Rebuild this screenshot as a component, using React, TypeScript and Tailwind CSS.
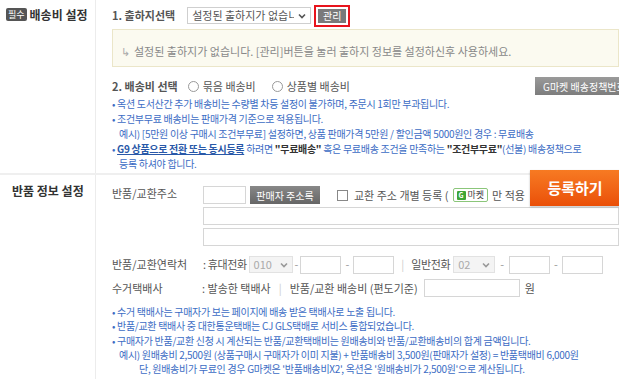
import React from "react";

const font = { fontFamily: '"Noto Sans CJK KR", "Noto Sans", sans-serif' };

function Select({ value, w }: { value: string; w: string }) {
  return (
    <div className={`flex h-[17px] items-center justify-between border border-[#cfcfcf] bg-white px-1 text-[11px] text-[#555] ${w}`}>
      <span className="overflow-hidden whitespace-nowrap">{value}</span>
      <svg width="8" height="6" viewBox="0 0 8 6" className="ml-1 shrink-0">
        <path d="M1 1.5 L4 4.5 L7 1.5" stroke="#555" strokeWidth="1.6" fill="none" />
      </svg>
    </div>
  );
}

function DimSelect({ value, w }: { value: string; w: string }) {
  return (
    <div className={`flex h-[17px] items-center justify-between border border-[#e2e2e2] bg-[#f4f4f4] px-1 text-[11px] text-[#aaa] ${w}`}>
      <span>{value}</span>
      <svg width="8" height="6" viewBox="0 0 8 6" className="shrink-0">
        <path d="M1 1.5 L4 4.5 L7 1.5" stroke="#999" strokeWidth="1.6" fill="none" />
      </svg>
    </div>
  );
}

function Box({ w }: { w: string }) {
  return <div className={`h-[18px] border border-[#d6d6d6] bg-white ${w}`} />;
}

export default function App() {
  return (
    <div style={font} className="relative h-[379px] w-[619px] overflow-hidden bg-white text-[11px] text-[#555]">
      {/* 배송비 설정 */}
      <div className="flex h-[175px] border-b-2 border-[#efefef]">
        <div className="flex w-[96px] shrink-0 items-start gap-[3px] border-r border-[#ececec] pl-[6px] pt-[8px]">
          <span className="rounded-[2px] bg-[#555] px-[2px] text-[9px] leading-[13px] text-white">필수</span>
          <span className="text-[12px] font-bold leading-[14px] text-[#333]">배송비 설정</span>
        </div>
        <div className="flex-1 pl-4">
          <div className="flex h-[29px] items-center pt-[2px]">
            <span className="font-bold text-[#555]">1. 출하지선택</span>
            <div className="ml-3">
              <Select value="설정된 출하지가 없습니다" w="w-[124px]" />
            </div>
            <div className="ml-[3px] flex h-[22px] w-[36px] items-center justify-center border-2 border-[#e8141c]">
              <span className="flex h-[14px] w-[28px] items-center justify-center bg-[#7a7a7a] text-[10px] text-white">관리</span>
            </div>
          </div>
          <div className="flex h-[38px] items-center border border-[#ebe6c9] bg-[#fbfaf0] pl-2 pt-[7px] text-[#888]">
            <span className="mr-1 text-[#aaa]">↳</span> 설정된 출하지가 없습니다. [관리]버튼을 눌러 출하지 정보를 설정하신후 사용하세요.
          </div>
          <div className="mt-[9px] flex h-[20px] items-center">
            <span className="font-bold text-[#555]">2. 배송비 선택</span>
            <label className="ml-[10px] flex items-center gap-[4px]">
              <span className="h-[11px] w-[11px] rounded-full border border-[#999] bg-white" />
              묶음 배송비
            </label>
            <label className="ml-[16px] flex items-center gap-[4px]">
              <span className="h-[11px] w-[11px] rounded-full border border-[#999] bg-white" />
              상품별 배송비
            </label>
            <span className="ml-auto flex h-[18px] w-[84px] items-center overflow-hidden whitespace-nowrap bg-gradient-to-b from-[#9a9a9a] to-[#7d7d7d] pl-[8px] text-[10px] text-white">
              G마켓 배송정책번호
            </span>
          </div>
          <ul className="text-[10px] leading-[15px] tracking-[-0.3px] text-[#3c6cc4]">
            <li>• 옥션 도서산간 추가 배송비는 수량별 차등 설정이 불가하며, 주문시 1회만 부과됩니다.</li>
            <li>• 조건부무료 배송비는 판매가격 기준으로 적용됩니다.</li>
            <li className="pl-[7px]">예시) [5만원 이상 구매시 조건부무료] 설정하면, 상품 판매가격 5만원 / 할인금액 5000원인 경우 : 무료배송</li>
            <li>
              • <b className="text-[#2958a8] underline">G9 상품으로 전환 또는 동시등록</b> 하려면 <b className="text-[#333]">"무료배송"</b> 혹은 무료배송 조건을 만족하는 <b className="text-[#333]">"조건부무료"</b>(선불) 배송정책으로
            </li>
            <li className="pl-[7px]">등록 하셔야 합니다.</li>
          </ul>
        </div>
      </div>

      {/* 반품 정보 설정 */}
      <div className="flex h-[204px]">
        <div className="w-[96px] shrink-0 border-r border-[#ececec] pl-[12px] pt-[7px]">
          <span className="text-[12px] font-bold text-[#333]">반품 정보 설정</span>
        </div>
        <div className="flex-1 pl-4 pt-[11px]">
          <div className="flex">
            <div className="w-[91px] shrink-0 leading-[14px]">반품/교환주소</div>
            <div className="flex flex-1 flex-col gap-[3px]">
              <div className="flex h-[18px] items-center">
                <Box w="w-[43px]" />
                <span className="ml-[4px] flex h-[18px] w-[70px] items-center justify-center bg-gradient-to-b from-[#888] to-[#666] text-[10px] text-white">판매자 주소록</span>
                <span className="ml-[17px] h-[11px] w-[11px] border border-[#888] bg-white" />
                <span className="ml-[6px]">교환 주소 개별 등록 (</span>
                <span className="ml-[4px] flex h-[14px] items-center gap-[2px] rounded-[2px] border border-[#8bc67a] px-[3px] text-[9px] text-[#444]">
                  <span className="flex h-[9px] w-[9px] items-center justify-center rounded-[1px] bg-[#3fa535] text-[7px] font-bold text-white">G</span>
                  마켓
                </span>
                <span className="ml-[4px]">만 적용</span>
              </div>
              <Box w="w-full" />
              <Box w="w-full" />
            </div>
          </div>

          <div className="mt-[10px] flex h-[17px] items-center">
            <div className="w-[91px] shrink-0">반품/교환연락처</div>
            <span className="tracking-[-0.4px]">: 휴대전화</span>
            <div className="ml-[2px]"><DimSelect value="010" w="w-[44px]" /></div>
            <span className="mx-[2px] text-[#999]">-</span>
            <Box w="w-[41px]" />
            <span className="mx-[4px] text-[#999]">-</span>
            <Box w="w-[41px]" />
            <span className="mx-[7px] text-[#ccc]">|</span>
            <span className="tracking-[-0.4px]">일반전화</span>
            <div className="ml-[3px]"><DimSelect value="02" w="w-[42px]" /></div>
            <span className="mx-[5px] text-[#999]">-</span>
            <Box w="w-[41px]" />
            <span className="mx-[4px] text-[#999]">-</span>
            <Box w="w-[41px]" />
          </div>

          <div className="mt-[6px] flex h-[18px] items-center">
            <div className="w-[90px] shrink-0">수거택배사</div>
            <span>: 발송한 택배사</span>
            <span className="mx-[8px] text-[#ccc]">|</span>
            <span>반품/교환 배송비 (편도기준)</span>
            <div className="ml-[6px]"><Box w="w-[96px]" /></div>
            <span className="ml-[5px]">원</span>
          </div>

          <ul className="mt-[8px] text-[10px] leading-[14.3px] tracking-[-0.3px] text-[#3c6cc4]">
            <li>• 수거 택배사는 구매자가 보는 페이지에 배송 받은 택배사로 노출 됩니다.</li>
            <li>• 반품/교환 택배사 중 대한통운택배는 CJ GLS택배로 서비스 통합되었습니다.</li>
            <li>• 구매자가 반품/교환 신청 시 계산되는 반품/교환택배비는 원배송비와 반품/교환배송비의 합계 금액입니다.</li>
            <li className="pl-[7px]">예시) 원배송비 2,500원 (상품구매시 구매자가 이미 지불) + 반품배송비 3,500원(판매자가 설정) = 반품택배비 6,000원</li>
            <li className="pl-[27px]">단, 원배송비가 무료인 경우 G마켓은 '반품배송비X2', 옥션은 '원배송비가 2,500원'으로 계산됩니다.</li>
          </ul>
        </div>
      </div>

      <div className="absolute left-[530px] top-[170px] flex h-[36px] w-[90px] items-center justify-center bg-gradient-to-b from-[#f77a22] to-[#ea4f07] text-[15px] font-bold text-white shadow-[0_1px_2px_rgba(0,0,0,0.25)]">
        등록하기
      </div>
    </div>
  );
}
